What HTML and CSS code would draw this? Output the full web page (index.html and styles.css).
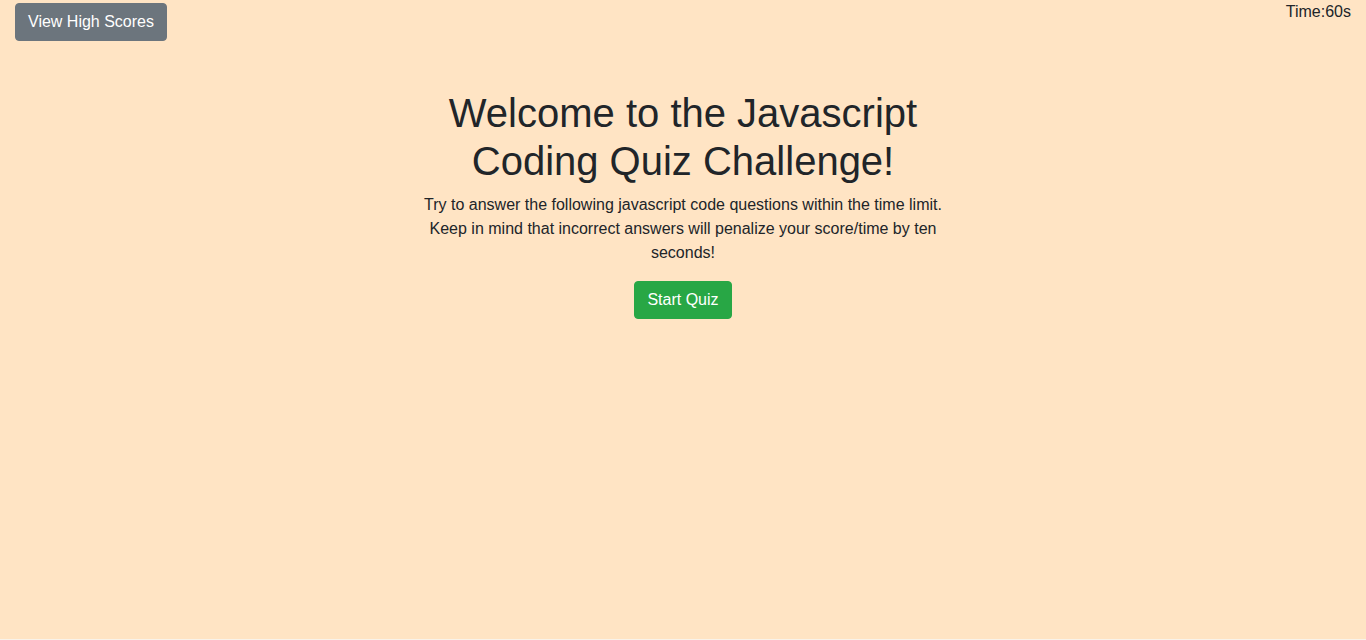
FILE: index.html
```html
<!DOCTYPE html>
<html lang="en">
<head>
<meta charset="utf-8">
<title>Javascript Coding Quiz</title>
<link rel="stylesheet" href="styles.css">
</head>
<body>
<header class="topbar">
  <button class="btn btn-secondary">View High Scores</button>
  <div class="timer">Time:60s</div>
</header>
<main class="intro">
  <h1 class="title">Welcome to the Javascript Coding Quiz Challenge!</h1>
  <p class="lead-text">Try to answer the following javascript code questions within the time limit. Keep in mind that incorrect answers will penalize your score/time by ten seconds!</p>
  <button class="btn btn-success">Start Quiz</button>
</main>
</body>
</html>
```
FILE: styles.css
```css
html {
  background: #f9f3ea;
  height: 100%;
}
body {
  margin: 0;
  height: 639px;
  background: #ffe4c4;
  font-family: "Liberation Sans", Arial, sans-serif;
  font-size: 16px;
  line-height: 24px;
  color: #212529;
}
.topbar {
  display: flex;
  justify-content: space-between;
  align-items: flex-start;
  padding: 0 15px;
}
.btn {
  font-family: inherit;
  font-size: 16px;
  line-height: 24px;
  padding: 6px 12px;
  border: 1px solid transparent;
  border-radius: 4px;
  color: #fff;
  cursor: pointer;
}
.btn-secondary {
  background: #6c757d;
  border-color: #6c757d;
  margin-top: 3px;
}
.btn-success {
  background: #28a745;
  border-color: #28a745;
}
.timer {
  color: #212529;
}
.intro {
  width: 540px;
  margin: 48px auto 0;
  display: flex;
  flex-direction: column;
  align-items: center;
  text-align: center;
}
.title {
  margin: 0 0 8px;
  font-size: 40px;
  line-height: 48px;
  font-weight: 400;
}
.lead-text {
  margin: 0 0 16px;
}
```
